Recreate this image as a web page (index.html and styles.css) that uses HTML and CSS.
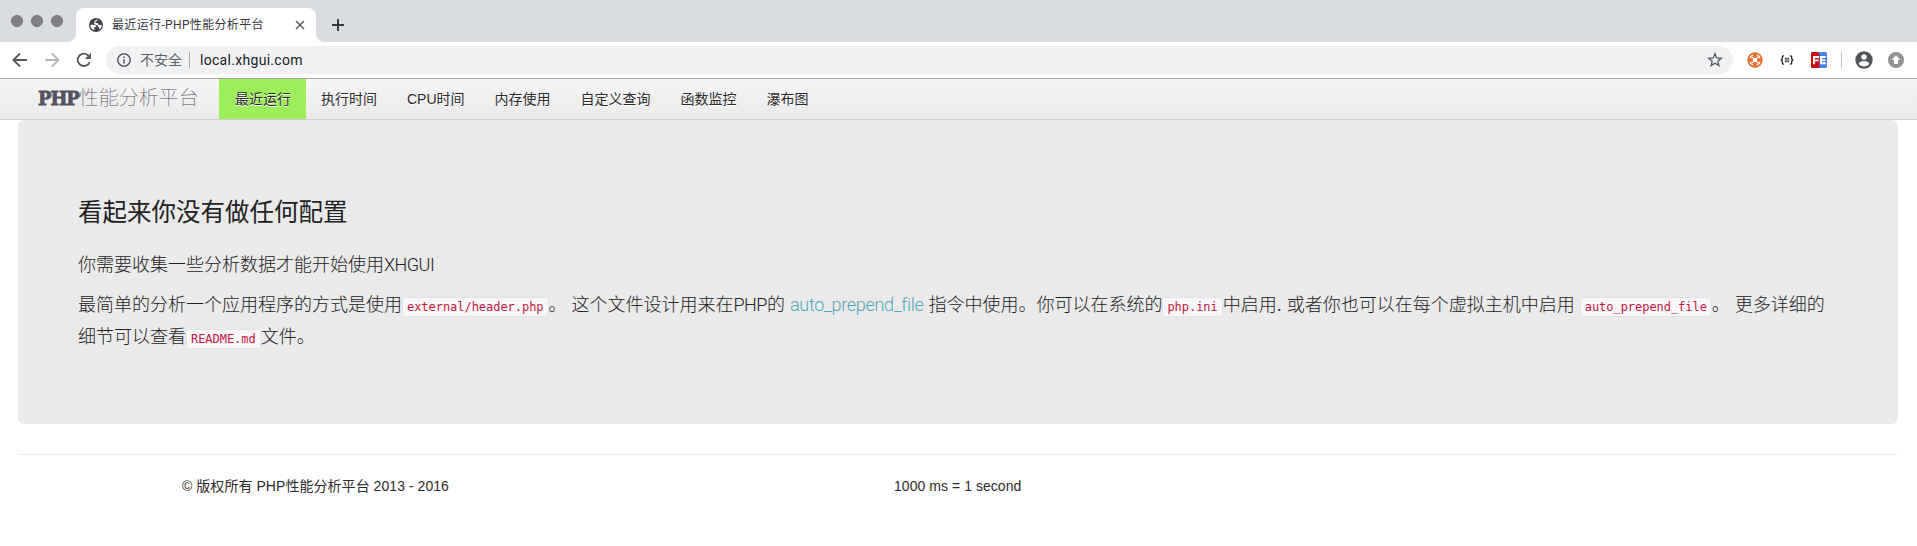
FILE: index.html
```html
<!DOCTYPE html>
<html lang="zh-CN">
<head>
<meta charset="utf-8">
<title>最近运行-PHP性能分析平台</title>
<link rel="stylesheet" href="styles.css">
</head>
<body>
<div class="tabstrip">
  <div class="lights"><i></i><i></i><i></i></div>
  <div class="tab">
    <svg class="globe" width="14" height="14" viewBox="0 0 14 14"><circle cx="7" cy="7" r="7" fill="#3f4347"/><path d="M1.300 6.800h3.500c1.500 0 2.400.9 2.400 2.200H5.400v3.300C3 11.600 1.300 9.600 1.300 6.800z" fill="#fff"/><path d="M8.300 1.500v1.600H6.500v1.800h2.300c.3 1.500 1.200 2.200 2.400 2.200h1.500c0 2.300-1.200 4.200-3.200 5.100 1.300-1.300 1.100-2.600-.2-3.200C8.700 7.500 8 6.900 6.900 6.700 5.300 6.400 4.800 5.300 5.300 3.900 5.700 2.500 6.800 1.600 8.300 1.500z" fill="#fff"/></svg>
    <span class="tab-title">最近运行-PHP性能分析平台</span>
    <svg class="close" width="10" height="10" viewBox="0 0 10 10"><path d="M1 1l8 8M9 1L1 9" stroke="#5b5f64" stroke-width="1.5"/></svg>
  </div>
  <svg class="plus" width="12" height="12" viewBox="0 0 12 12"><path d="M6 0v12M0 6h12" stroke="#36393d" stroke-width="1.9"/></svg>
</div>
<div class="toolbar">
  <svg class="ic back" width="16" height="16" viewBox="0 0 16 16"><path d="M15 8H2M8 1.500L1.500 8 8 14.500" fill="none" stroke="#55585c" stroke-width="1.900"/></svg>
  <svg class="ic fwd" width="16" height="16" viewBox="0 0 16 16"><path d="M1 8h13M8 1.500L14.500 8 8 14.500" fill="none" stroke="#b5b7ba" stroke-width="1.900"/></svg>
  <svg class="ic reload" width="16" height="16" viewBox="0 0 16 16"><path d="M13.700 10A6.200 6.200 0 1 1 12.600 3.800L13.800 5" fill="none" stroke="#55585c" stroke-width="1.900"/><path d="M15 .8V7H8.800z" fill="#55585c"/></svg>
  <div class="omnibox">
    <svg width="14" height="14" viewBox="0 0 14 14"><circle cx="7" cy="7" r="6.200" fill="none" stroke="#5c6065" stroke-width="1.500"/><path d="M7 6.200v4.200M7 3.400v1.600" stroke="#5c6065" stroke-width="1.600"/></svg>
    <span class="insecure">不安全</span>
    <span class="url">local.xhgui.com</span>
    <svg class="star" width="16" height="16" viewBox="0 0 16 16"><path d="M8 1.800l1.700 4.200 4.600.3-3.500 2.900 1.100 4.400L8 11.200l-3.900 2.400 1.100-4.400L1.700 6.300 6.300 6z" fill="none" stroke="#55585c" stroke-width="1.300"/></svg>
  </div>
  <div class="exts">
    <svg width="16" height="16" viewBox="0 0 16 16"><circle cx="8" cy="8" r="7.700" fill="#ea6a30"/><circle cx="8" cy="8" r="2.300" fill="#fff"/><path d="M4.700 4.700l1.500 1.500M11.300 4.700L9.800 6.200M4.700 11.300l1.500-1.500M11.300 11.300L9.800 9.800" stroke="#fff" stroke-width="1.300"/><path d="M2.900 6.200Q3.600 3.800 6.200 2.900M9.800 2.900Q12.400 3.800 13.100 6.200M13.100 9.800Q12.400 12.200 9.800 13.100M6.200 13.100Q3.600 12.200 2.900 9.800" stroke="#fff" stroke-width="1.300" fill="none"/></svg>
    <svg width="14" height="10" viewBox="0 0 14 10"><path d="M4 .9H3.300Q2.300.9 2.300 2v1.600Q2.300 5 .7 5q1.600 0 1.600 1.400V8q0 1.100 1 1.100H4M10 .9h.7q1 0 1 1.100v1.600Q11.700 5 13.300 5q-1.600 0-1.600 1.400V8q0 1.100-1 1.100H10" fill="none" stroke="#222" stroke-width="1.300"/><path d="M4.700 3.300h4.600M4.700 5h4.600M4.700 6.700h4.600" stroke="#333" stroke-width="1"/></svg>
    <svg width="16" height="16" viewBox="0 0 16 16"><rect width="16" height="16" rx="1.500" fill="#467fe8"/><path d="M1.500 0H7l1.500 3v13h-7Q0 16 0 14.500v-13Q0 0 1.500 0z" fill="#d00d12"/><path d="M3 12.200V5h5M3 8.400h4.500M14.700 5H10v6.300h4.700M10 8.200h4.300" fill="none" stroke="#fff" stroke-width="1.900"/></svg>
    <i class="sep"></i>
    <svg width="18" height="18" viewBox="0 0 18 18"><circle cx="9" cy="9" r="8.700" fill="#505358"/><circle cx="9" cy="6" r="2.700" fill="#fff"/><path d="M3.600 12.700c1-1.900 3.200-2.600 5.400-2.600s4.400.7 5.400 2.600c-1.200 1.700-3.200 2.700-5.400 2.700s-4.200-1-5.400-2.700z" fill="#fff"/></svg>
    <svg width="16" height="16" viewBox="0 0 16 16"><circle cx="8" cy="8" r="8" fill="#919191"/><path d="M8 3.300L12.500 8H10v4H6V8H3.500z" fill="#fff"/></svg>
  </div>
</div>
<nav class="navbar">
  <a class="brand"><b>PHP</b>性能分析平台</a>
  <ul class="nav">
    <li class="active">最近运行</li><li>执行时间</li><li>CPU时间</li><li>内存使用</li><li>自定义查询</li><li>函数监控</li><li>瀑布图</li>
  </ul>
</nav>
<main class="hero">
  <h2>看起来你没有做任何配置</h2>
  <p>你需要收集一些分析数据才能开始使用<span class="lat upper">XHGUI</span></p>
  <p>最简单的分析一个应用程序的方式是使用<code>external/header.php</code>。 这个文件设计用来在<span class="lat upper">PHP</span>的 <a class="lat">auto_prepend_file</a> 指令中使用。你可以在系统的<code>php.ini</code>中启用. 或者你也可以在每个虚拟主机中启用 <code>auto_prepend_file</code>。 更多详细的<br>细节可以查看<code>README.md</code>文件。</p>
</main>
<footer class="footer">
  <span>© 版权所有 PHP性能分析平台 2013 - 2016</span>
  <span>1000 ms = 1 second</span>
</footer>
</body>
</html>
```
FILE: styles.css
```css
* { box-sizing: border-box; }
body {
  margin: 0;
  background: #fff;
  color: #2b2b2b;
  font: 14px/20px "Liberation Sans", "Noto Sans CJK SC", sans-serif;
  overflow: hidden;
}
svg { display: block; flex: none; }

/* browser frame */
.tabstrip {
  display: flex;
  height: 42px;
  background: #d9dce1;
  padding-left: 11px;
}
.lights { display: flex; gap: 8px; padding-top: 15px; width: 65px; }
.lights i {
  width: 12px; height: 12px;
  border-radius: 50%;
  background: #807f83;
  border: 1px solid #727176;
}
.tab {
  position: relative;
  display: flex;
  align-items: center;
  width: 240px;
  height: 34px;
  margin-top: 8px;
  padding: 0 11px 0 13px;
  border-radius: 8px 8px 0 0;
  background: #fff;
}
/* outward curves at the foot of the tab */
.tab::before, .tab::after {
  content: "";
  position: absolute;
  bottom: 0;
  width: 8px;
  height: 8px;
}
.tab::before { left: -8px; background: radial-gradient(circle at 0 0, transparent 7.5px, #fff 8px); }
.tab::after { right: -8px; background: radial-gradient(circle at 100% 0, transparent 7.5px, #fff 8px); }
.tab-title {
  flex: 1;
  margin-left: 9px;
  font: 12px/18px Roboto, "Noto Sans CJK SC", sans-serif;
  letter-spacing: 0.35px;
  color: #35363a;
  white-space: nowrap;
}
.plus { margin: 19px 0 0 16px; }
.toolbar {
  display: flex;
  align-items: center;
  height: 37px;
  padding: 0 13px 0 12px;
  border-bottom: 1px solid #a9a9a9;
}
.fwd, .reload { margin-left: 16px; }
.omnibox {
  display: flex;
  align-items: center;
  flex: 1;
  height: 28px;
  margin-left: 14px;
  padding: 0 10px 0 11px;
  border-radius: 14px;
  background: #eff1f3;
  font: 14px/20px Roboto, "Noto Sans CJK SC", sans-serif;
}
.insecure {
  margin-left: 9px;
  padding-right: 7px;
  line-height: 16px;
  color: #5f6368;
  border-right: 1px solid #a5a8ac;
}
.url { flex: 1; margin-left: 10px; color: #202124; letter-spacing: 0.3px; }
.exts { display: flex; align-items: center; margin-left: 14px; }
.exts svg:nth-child(2) { margin-left: 17px; }
.exts svg:nth-child(3) { margin-left: 17px; }
.sep { width: 1px; height: 16px; margin: 0 13px 0 14px; background: #c6c8ca; }
.exts svg:last-child { margin-left: 15px; }

/* navigation */
.navbar {
  display: flex;
  height: 41px;
  padding-left: 38px;
  border-bottom: 1px solid #ccc;
  background: linear-gradient(#f5f5f5, #eaeaea);
}
.brand {
  width: 181px;
  padding-top: 8px;
  font-family: "Noto Sans CJK SC", sans-serif;
  font-size: 20px;
  font-weight: 100;
  color: #55525f;
  white-space: nowrap;
}
.brand b {
  font: bold 18px/20px "DejaVu Serif", serif;
  letter-spacing: -1.1px;
  -webkit-text-stroke: 0.8px #55525f;
}
.nav { display: flex; margin: 0; padding: 0; list-style: none; }
.nav li { padding: 10px 15px; text-shadow: 0 1px 0 #fff; white-space: nowrap; }
.nav .active { padding-left: 16px; background: #9eee5c; height: 40px; }

/* content */
.hero {
  height: 304px;
  margin: 0 19px 0 18px;
  padding: 73px 60px 0;
  border-radius: 6px;
  background: #eaeaea;
  color: #222;
  font-size: 18px;
  font-weight: 300;
  font-family: "Liberation Sans", "Noto Sans CJK SC", sans-serif;
}
.hero h2 { margin: 0 0 16px; font-size: 24.5px; line-height: 40px; font-weight: 400; }
.hero p { margin: 0 0 8px; line-height: 32px; white-space: nowrap; }
.hero .lat { font-family: Roboto, sans-serif; font-weight: 300; letter-spacing: -0.3px; }
.hero .upper { letter-spacing: -0.5px; }
.hero a { color: #4fa8bd; }
code {
  display: inline-block;
  height: 20px;
  padding: 0 4px;
  border: 1px solid #e1e1e8;
  border-radius: 3px;
  background: #f7f7f9;
  color: #c4173f;
  font: 12px/18px "DejaVu Sans Mono", monospace;
  letter-spacing: -0.04px;
}

.footer {
  display: flex;
  margin: 30px 19px 0 18px;
  padding: 21px 0 0 164px;
  border-top: 1px solid #eaeaea;
  letter-spacing: 0.05px;
}
.footer span:first-child { width: 712px; }
```
